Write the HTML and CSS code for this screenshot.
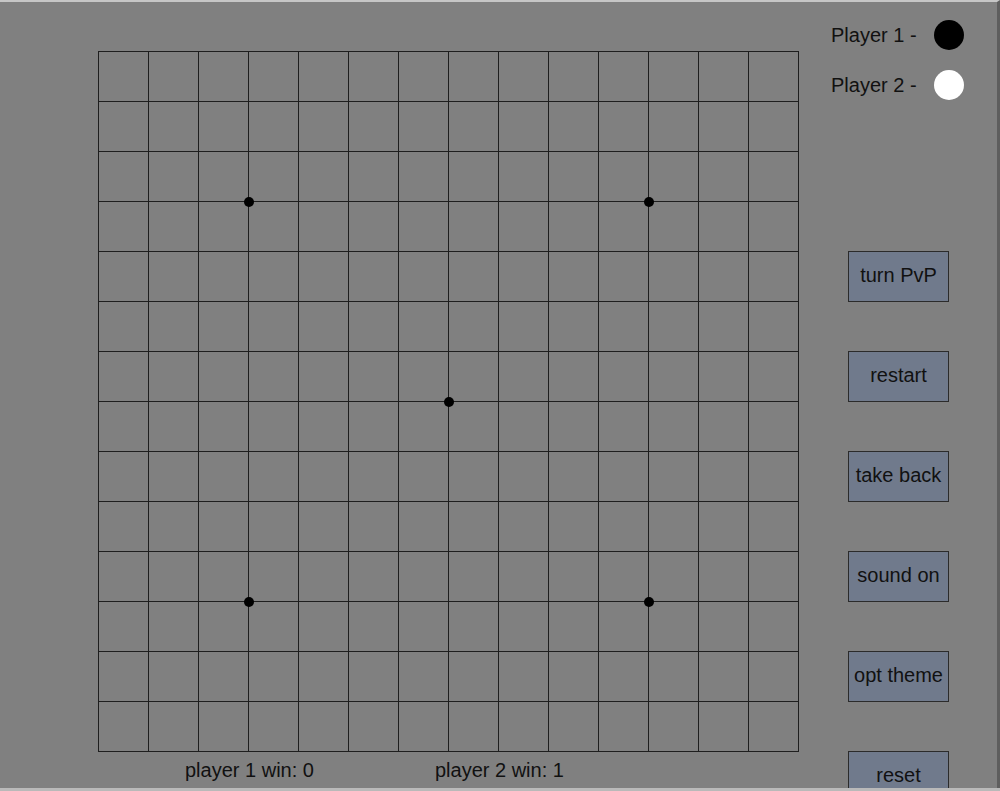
FILE: index.html
```html
<!DOCTYPE html>
<html lang="en">
<head>
<meta charset="utf-8">
<title>Gomoku</title>
<link rel="stylesheet" href="styles.css">
</head>
<body>
<div class="app">
  <div class="main">
    <div class="board">
      <span class="star s1"></span>
      <span class="star s2"></span>
      <span class="star s3"></span>
      <span class="star s4"></span>
      <span class="star s5"></span>
    </div>
    <div class="scores">
      <span>player 1 win: 0</span>
      <span>player 2 win: 1</span>
    </div>
  </div>
  <div class="side">
    <div class="legend">
      <div class="legend-row"><span>Player 1 -</span><span class="stone black"></span></div>
      <div class="legend-row"><span>Player 2 -</span><span class="stone white"></span></div>
    </div>
    <div class="buttons">
      <button class="btn">turn PvP</button>
      <button class="btn">restart</button>
      <button class="btn">take back</button>
      <button class="btn">sound on</button>
      <button class="btn">opt theme</button>
      <button class="btn">reset</button>
    </div>
  </div>
</div>
</body>
</html>
```

FILE: styles.css
```css
html, body {
  margin: 0;
  padding: 0;
  height: 791px;
  overflow: hidden;
  background: #b9b9b9;
}

body {
  font-family: "Liberation Sans", Arial, sans-serif;
  color: #111;
}

.app {
  display: flex;
  height: 786px;
  border-top: 2px solid #c6c6c6;
  background: #808080;
  border-right: 3px solid #5e5e5e;
  overflow: hidden;
}

.main {
  display: flex;
  flex-direction: column;
  padding-left: 98px;
  padding-top: 49px;
}

.board {
  position: relative;
  width: 701px;
  height: 701px;
  background-image:
    linear-gradient(to right, #1e1e1e 1px, transparent 1px),
    linear-gradient(to bottom, #1e1e1e 1px, transparent 1px);
  background-size: 50px 50px;
}

.star {
  position: absolute;
  width: 10px;
  height: 10px;
  margin: -4.5px 0 0 -4.5px;
  border-radius: 50%;
  background: #000;
}
.s1 { left: 150px; top: 150px; }
.s2 { left: 550px; top: 150px; }
.s3 { left: 350px; top: 350px; }
.s4 { left: 150px; top: 550px; }
.s5 { left: 550px; top: 550px; }

.scores {
  display: flex;
  gap: 121px;
  padding-left: 87px;
  margin-top: 7px;
  font-size: 20px;
  line-height: 23px;
}

.side {
  display: flex;
  flex-direction: column;
  padding-left: 32px;
  padding-top: 8px;
}

.legend {
  display: flex;
  flex-direction: column;
}

.legend-row {
  display: flex;
  align-items: center;
  height: 50px;
  font-size: 20px;
}

.legend-row span:first-child {
  width: 103px;
}

.stone {
  width: 30px;
  height: 30px;
  border-radius: 50%;
}
.black { background: #000; }
.white { background: #fff; }

.buttons {
  display: flex;
  flex-direction: column;
  gap: 49px;
  padding-left: 17px;
  margin-top: 141px;
}

.btn {
  width: 101px;
  height: 51px;
  box-sizing: border-box;
  border: 1px solid #2b2b2b;
  background: #707a8c;
  font-family: "Liberation Sans", Arial, sans-serif;
  font-size: 20px;
  color: #111;
  padding: 0 0 2px;
  flex-shrink: 0;
}
```
